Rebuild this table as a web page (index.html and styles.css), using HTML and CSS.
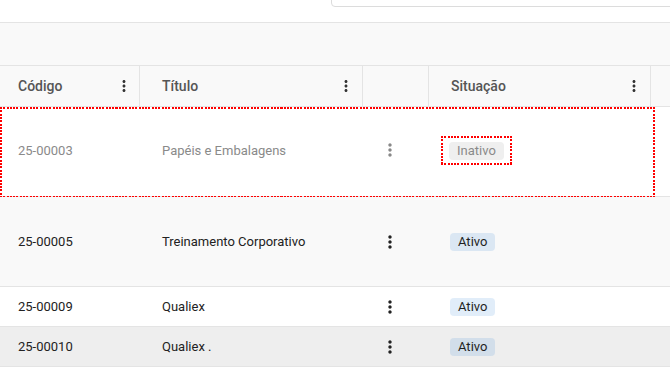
FILE: index.html
```html
<!DOCTYPE html>
<html lang="pt">
<head>
<meta charset="utf-8">
<link rel="stylesheet" href="styles.css">
</head>
<body>
<div class="topbar"><div class="search"></div></div>
<div class="toolbar"></div>
<div class="table">
  <div class="row head">
    <div class="cell c1"><span class="htext">Código</span><svg class="hdots" viewBox="0 0 24 24"><path d="M12 8c1.1 0 2-.9 2-2s-.9-2-2-2-2 .9-2 2 .9 2 2 2zm0 2c-1.1 0-2 .9-2 2s.9 2 2 2 2-.9 2-2-.9-2-2-2zm0 6c-1.1 0-2 .9-2 2s.9 2 2 2 2-.9 2-2-.9-2-2-2z"/></svg></div>
    <div class="cell c2"><span class="htext">Título</span><svg class="hdots" viewBox="0 0 24 24"><path d="M12 8c1.1 0 2-.9 2-2s-.9-2-2-2-2 .9-2 2 .9 2 2 2zm0 2c-1.1 0-2 .9-2 2s.9 2 2 2 2-.9 2-2-.9-2-2-2zm0 6c-1.1 0-2 .9-2 2s.9 2 2 2 2-.9 2-2-.9-2-2-2z"/></svg></div>
    <div class="cell c3"></div>
    <div class="cell c4"><span class="htext">Situação</span><svg class="hdots" viewBox="0 0 24 24"><path d="M12 8c1.1 0 2-.9 2-2s-.9-2-2-2-2 .9-2 2 .9 2 2 2zm0 2c-1.1 0-2 .9-2 2s.9 2 2 2 2-.9 2-2-.9-2-2-2zm0 6c-1.1 0-2 .9-2 2s.9 2 2 2 2-.9 2-2-.9-2-2-2z"/></svg></div>
    <div class="cell c5"></div>
  </div>

  <div class="row tall disabled selected">
    <div class="cell c1">25-00003</div>
    <div class="cell c2">Papéis e Embalagens</div>
    <div class="cell c3"><svg class="dots" viewBox="0 0 24 24"><path d="M12 8c1.1 0 2-.9 2-2s-.9-2-2-2-2 .9-2 2 .9 2 2 2zm0 2c-1.1 0-2 .9-2 2s.9 2 2 2 2-.9 2-2-.9-2-2-2zm0 6c-1.1 0-2 .9-2 2s.9 2 2 2 2-.9 2-2-.9-2-2-2z"/></svg></div>
    <div class="cell c4"><span class="focusbox"><span class="badge inactive">Inativo</span></span></div>
    <div class="cell c5"></div>
  </div>

  <div class="row tall striped">
    <div class="cell c1">25-00005</div>
    <div class="cell c2">Treinamento Corporativo</div>
    <div class="cell c3"><svg class="dots" viewBox="0 0 24 24"><path d="M12 8c1.1 0 2-.9 2-2s-.9-2-2-2-2 .9-2 2 .9 2 2 2zm0 2c-1.1 0-2 .9-2 2s.9 2 2 2 2-.9 2-2-.9-2-2-2zm0 6c-1.1 0-2 .9-2 2s.9 2 2 2 2-.9 2-2-.9-2-2-2z"/></svg></div>
    <div class="cell c4"><span class="badge active">Ativo</span></div>
    <div class="cell c5"></div>
  </div>

  <div class="row short">
    <div class="cell c1">25-00009</div>
    <div class="cell c2">Qualiex</div>
    <div class="cell c3"><svg class="dots" viewBox="0 0 24 24"><path d="M12 8c1.1 0 2-.9 2-2s-.9-2-2-2-2 .9-2 2 .9 2 2 2zm0 2c-1.1 0-2 .9-2 2s.9 2 2 2 2-.9 2-2-.9-2-2-2zm0 6c-1.1 0-2 .9-2 2s.9 2 2 2 2-.9 2-2-.9-2-2-2z"/></svg></div>
    <div class="cell c4"><span class="badge active">Ativo</span></div>
    <div class="cell c5"></div>
  </div>

  <div class="row short hover">
    <div class="cell c1">25-00010</div>
    <div class="cell c2">Qualiex .</div>
    <div class="cell c3"><svg class="dots" viewBox="0 0 24 24"><path d="M12 8c1.1 0 2-.9 2-2s-.9-2-2-2-2 .9-2 2 .9 2 2 2zm0 2c-1.1 0-2 .9-2 2s.9 2 2 2 2-.9 2-2-.9-2-2-2zm0 6c-1.1 0-2 .9-2 2s.9 2 2 2 2-.9 2-2-.9-2-2-2z"/></svg></div>
    <div class="cell c4"><span class="badge active">Ativo</span></div>
    <div class="cell c5"></div>
  </div>
</div>
</body>
</html>
```
FILE: styles.css
```css
* { box-sizing: border-box; }
html, body { margin: 0; padding: 0; background: #fff; }
body {
  font-family: Roboto, "Liberation Sans", Arial, sans-serif;
  font-size: 13px;
  color: #222;
  overflow: hidden;
}
.topbar {
  height: 23px;
  border-bottom: 1px solid #e4e4e4;
  overflow: hidden;
}
.search {
  margin-left: 331px;
  margin-top: -24px;
  width: 380px;
  height: 31px;
  border: 1px solid #dcdcdc;
  border-radius: 4px;
}
.toolbar {
  height: 43px;
  background: #f9f9f9;
  border-bottom: 1px solid #e4e4e4;
}
.table { width: 670px; }
.row {
  display: grid;
  grid-template-columns: 140px 223px 66px 222px 19px;
  border-bottom: 1px solid #e4e4e4;
  position: relative;
}
.head { height: 41px; background: #f9f9f9; }
.tall { height: 90px; }
.short { height: 40px; }
.striped { background: #f9f9f9; }
.hover { background: #eeeeee; }
.cell {
  display: flex;
  align-items: center;
  padding-left: 22px;
  min-width: 0;
}
.c1 { padding-left: 18px; }
.head .cell { border-right: 1px solid #e4e4e4; padding-bottom: 1px; }
.head .c5 { border-right: none; }
.head .c3 { padding: 0; }
.htext {
  font-size: 14px;
  font-weight: 500;
  color: #555;
  flex: 1;
}
.hdots {
  width: 18px;
  height: 18px;
  fill: #333;
  margin-right: 7px;
}
.head .c1 .hdots { margin-right: 6px; }
.c3 { padding-left: 17px; }
.dots {
  width: 20px;
  height: 20px;
  fill: #222;
}
.badge {
  display: inline-block;
  height: 18px;
  line-height: 18px;
  padding: 0 8px;
  border-radius: 4px;
  font-size: 13px;
  margin-left: -1px;
}
.active {
  background: rgba(25, 118, 210, 0.13);
  color: #1f1f1f;
}
.inactive {
  background: #efefef;
  color: #8a8a8a;
}
.focusbox {
  display: inline-block;
  margin-left: -10px;
  padding: 6px 8px 5px 8px;
  background:
    repeating-linear-gradient(90deg, #f00 0 2px, transparent 2px 3.3px) top left / 100% 2px no-repeat,
    repeating-linear-gradient(90deg, #f00 0 2px, transparent 2px 3.3px) bottom left / 100% 2px no-repeat,
    repeating-linear-gradient(180deg, #f00 0 2px, transparent 2px 3.3px) top left / 2px 100% no-repeat,
    repeating-linear-gradient(180deg, #f00 0 2px, transparent 2px 3.3px) top right / 2px 100% no-repeat;
}
.focusbox .badge { margin-left: 0; }
.disabled .cell { color: #8a8a8a; padding-bottom: 3px; }
.disabled .dots { fill: #888; }
.selected::after {
  content: "";
  position: absolute;
  left: 0;
  top: 0;
  width: 655px;
  height: 91px;
  pointer-events: none;
  background:
    repeating-linear-gradient(90deg, #f00 0 2px, transparent 2px 3.3px) top left / 100% 2px no-repeat,
    repeating-linear-gradient(90deg, #f00 0 2px, transparent 2px 3.3px) bottom left / 100% 2px no-repeat,
    repeating-linear-gradient(180deg, #f00 0 2px, transparent 2px 3.3px) top left / 2px 100% no-repeat,
    repeating-linear-gradient(180deg, #f00 0 2px, transparent 2px 3.3px) top right / 2px 100% no-repeat;
}
```
